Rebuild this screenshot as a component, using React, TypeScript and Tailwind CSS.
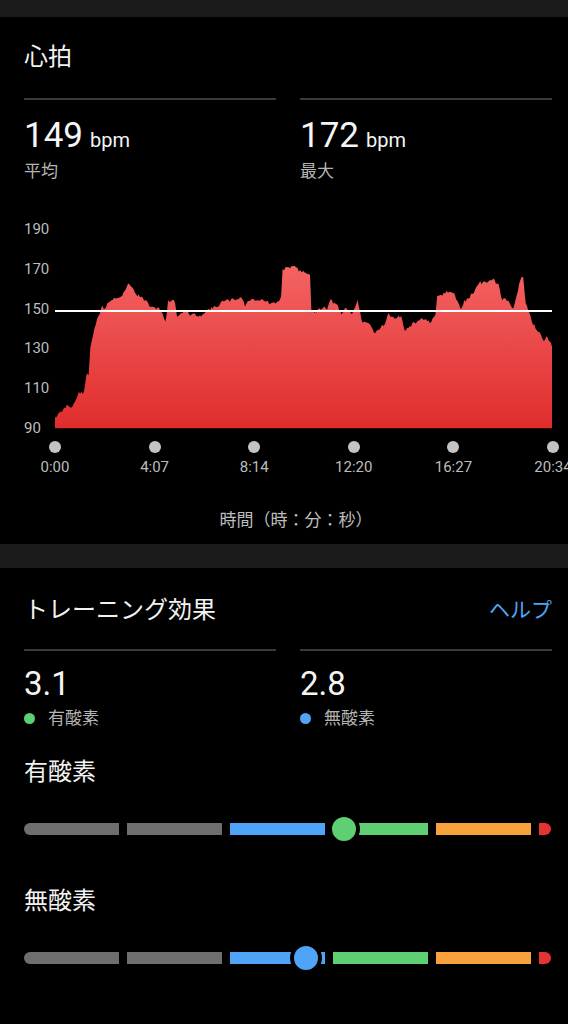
import React from "react";

// heart rate outline traced in chart units (x: 152..1528, y: 90bpm = 685, 20bpm = 119)
const trace: [number, number][] = [
  [152, 650], [160, 645], [175, 630], [185, 615], [200, 620], [210, 600], [218, 578], [232, 580],
  [240, 520], [245, 525], [250, 440], [258, 400], [265, 370], [275, 345], [280, 320], [290, 325],
  [300, 305], [320, 292], [335, 290], [345, 275], [355, 252], [362, 255], [370, 272], [380, 285],
  [395, 295], [410, 310], [420, 325], [440, 322], [450, 345], [458, 365], [465, 305], [478, 298],
  [485, 310], [490, 350], [500, 340], [515, 330], [525, 345], [540, 342], [550, 355], [560, 340],
  [575, 330], [585, 325], [600, 320], [615, 305], [640, 300], [660, 295], [670, 292], [678, 318],
  [690, 300], [710, 298], [730, 300], [745, 310], [760, 312], [770, 305], [778, 290], [782, 210],
  [795, 200], [815, 202], [835, 215], [858, 220], [862, 335], [870, 340], [880, 330], [895, 320],
  [905, 325], [915, 300], [925, 310], [935, 320], [945, 345], [955, 325], [965, 330], [975, 340],
  [990, 300], [1000, 360], [1010, 370], [1025, 375], [1035, 398], [1050, 385], [1065, 370],
  [1075, 340], [1085, 355], [1095, 350], [1110, 350], [1120, 390], [1130, 385], [1145, 370],
  [1160, 360], [1175, 355], [1190, 370], [1205, 350], [1210, 290], [1220, 285], [1240, 275],
  [1255, 280], [1270, 310], [1275, 330], [1285, 305], [1300, 290], [1315, 270], [1325, 250],
  [1345, 245], [1365, 240], [1380, 255], [1390, 300], [1400, 298], [1410, 305], [1420, 325],
  [1430, 290], [1440, 240], [1448, 230], [1455, 310], [1465, 340], [1475, 370], [1490, 395],
  [1505, 420], [1515, 410], [1528, 440],
];

function buildPath() {
  let seed = 11;
  const rnd = () => {
    seed = (seed * 9301 + 49297) % 233280;
    return seed / 233280;
  };
  const pts: string[] = [];
  for (let i = 0; i < trace.length - 1; i++) {
    const [x0, y0] = trace[i];
    const [x1, y1] = trace[i + 1];
    const steps = Math.max(1, Math.round((x1 - x0) / 4));
    for (let s = 0; s < steps; s++) {
      const t = s / steps;
      const x = x0 + (x1 - x0) * t;
      const y = y0 + (y1 - y0) * t + (rnd() - 0.5) * 10;
      pts.push(`${x.toFixed(1)},${y.toFixed(1)}`);
    }
  }
  const last = trace[trace.length - 1];
  pts.push(`${last[0]},${last[1]}`);
  return `M152,685 L${pts.join(" L")} L1528,685 Z`;
}

const areaPath = buildPath();

const yLabels = ["190", "170", "150", "130", "110", "90"];
const xLabels = ["0:00", "4:07", "8:14", "12:20", "16:27", "20:34"];

const HeartChart = () => (
  <div className="mt-[36px]">
    <div className="flex">
      <div className="flex h-[219px] w-[31px] flex-col justify-between text-[15px] leading-[20px] text-[#bdbdbd]">
        {yLabels.map((l) => (
          <span key={l}>{l}</span>
        ))}
      </div>
      <svg width={498} height={219} viewBox="152 57 1376 657" preserveAspectRatio="none">
        <defs>
          <linearGradient id="hr" x1="0" y1="200" x2="0" y2="685" gradientUnits="userSpaceOnUse">
            <stop offset="0" stopColor="#f46363" />
            <stop offset="1" stopColor="#df2d2c" />
          </linearGradient>
        </defs>
        <path d={areaPath} fill="url(#hr)" />
        <line x1="152" y1="333" x2="1528" y2="333" stroke="#ffffff" strokeWidth={2} vectorEffect="non-scaling-stroke" />
      </svg>
    </div>

    {/* time axis */}
    <div className="ml-[31px] mt-[3px] flex w-[498px] justify-between">
      {xLabels.map((l) => (
        <div key={l} className="flex w-0 flex-col items-center">
          <span className="h-3 w-3 shrink-0 rounded-full bg-[#c4c4c4]" />
          <span className="mt-1 whitespace-nowrap text-[15px] leading-[20px] text-[#bdbdbd]">{l}</span>
        </div>
      ))}
    </div>
  </div>
);

const Stat = ({ value, unit, label, dot }: { value: string; unit?: string; label: string; dot?: string }) => (
  <div>
    <div className="h-[2px] bg-[#3a3a3a]" />
    <div className={unit ? "mt-[18px] flex items-baseline gap-[7px]" : "mt-[16px] flex items-baseline"}>
      <span className={unit ? "text-[35px] leading-none text-[#f5f5f5]" : "text-[33px] leading-none text-[#f5f5f5]"}>
        {value}
      </span>
      {unit && <span className="text-[20px] leading-none text-[#f5f5f5]">{unit}</span>}
    </div>
    <div className="mt-[6px] flex items-center gap-[13px] text-[17px] leading-[24px] text-[#b4b4b4]">
      {dot && <span className={`h-[11px] w-[11px] rounded-full ${dot}`} />}
      <span>{label}</span>
    </div>
  </div>
);

const ZoneBar = ({ knobLeft, knobColor }: { knobLeft: string; knobColor: string }) => (
  <div className="relative flex h-8 items-center gap-2">
    <span className="h-3 w-[95px] rounded-l-full bg-[#6e6e6e]" />
    <span className="h-3 w-[95px] bg-[#6e6e6e]" />
    <span className="h-3 w-[95px] bg-[#4fa4f7]" />
    <span className="h-3 w-[95px] bg-[#5ecf72]" />
    <span className="h-3 w-[95px] bg-[#f6a13b]" />
    <span className="h-3 w-[12px] rounded-r-full bg-[#e53232]" />
    <span className={`absolute top-0 h-8 w-8 rounded-full border-4 border-black ${knobLeft} ${knobColor}`} />
  </div>
);

export default function App() {
  return (
    <div className="min-h-[1024px] w-[568px] overflow-hidden bg-black font-[Roboto,'Noto_Sans_CJK_JP',sans-serif]">
      <div className="h-[17px] bg-[#1b1b1b]" />

      {/* Heart rate */}
      <section className="pb-3 pl-6 pr-4 pt-[25px]">
        <h2 className="text-[24px] leading-[30px] text-[#f2f2f2]">心拍</h2>
        <div className="mt-[26px] grid grid-cols-2 gap-6">
          <Stat value="149" unit="bpm" label="平均" />
          <Stat value="172" unit="bpm" label="最大" />
        </div>

        <HeartChart />

        <p className="mt-[31px] pl-4 text-center text-[17px] leading-[24px] text-[#bdbdbd]">時間（時：分：秒）</p>
      </section>

      <div className="h-6 bg-[#1b1b1b]" />

      {/* Training effect */}
      <section className="pl-6 pr-4 pt-[27px]">
        <div className="flex items-center justify-between">
          <h2 className="text-[24px] leading-[30px] text-[#f2f2f2]">トレーニング効果</h2>
          <span className="text-[21px] leading-[30px] text-[#4ea5f6]">ヘルプ</span>
        </div>
        <div className="mt-6 grid grid-cols-2 gap-6">
          <Stat value="3.1" label="有酸素" dot="bg-[#5ecf72]" />
          <Stat value="2.8" label="無酸素" dot="bg-[#4fa4f7]" />
        </div>

        <h3 className="mt-[27px] text-[24px] leading-[30px] text-[#f2f2f2]">有酸素</h3>
        <div className="mt-[26px]">
          <ZoneBar knobLeft="left-[304px]" knobColor="bg-[#5ecf72]" />
        </div>

        <h3 className="mt-[41px] text-[24px] leading-[30px] text-[#f2f2f2]">無酸素</h3>
        <div className="mt-[26px]">
          <ZoneBar knobLeft="left-[266px]" knobColor="bg-[#4fa4f7]" />
        </div>
      </section>
    </div>
  );
}
